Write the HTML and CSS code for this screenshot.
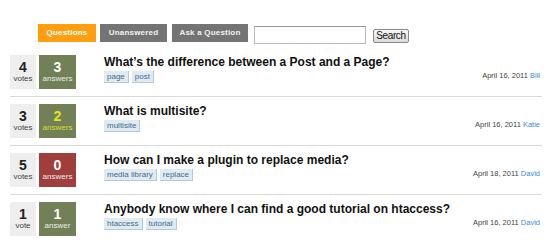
FILE: index.html
```html
<!DOCTYPE html>
<html>
<head>
<meta charset="utf-8">
<link rel="stylesheet" href="styles.css">
</head>
<body>
<div class="nav">
  <a class="tab tab-active tab-q">Questions</a>
  <a class="tab tab-u">Unanswered</a>
  <a class="tab tab-a">Ask a Question</a>
  <input class="search-input" type="text">
  <button class="search-btn">Search</button>
</div>
<div class="list">
  <div class="row">
    <div class="votes"><span class="num">4</span><span class="lbl">votes</span></div>
    <div class="answers"><span class="num">3</span><span class="lbl">answers</span></div>
    <div class="summary">
      <div class="title">What’s the difference between a Post and a Page?</div>
      <div class="meta">
        <div class="tags"><span class="tag">page</span><span class="tag">post</span></div>
        <div class="date">April 16, 2011 <span class="user">Bill</span></div>
      </div>
    </div>
  </div>
  <div class="row">
    <div class="votes"><span class="num">3</span><span class="lbl">votes</span></div>
    <div class="answers accepted"><span class="num">2</span><span class="lbl">answers</span></div>
    <div class="summary">
      <div class="title">What is multisite?</div>
      <div class="meta">
        <div class="tags"><span class="tag">multisite</span></div>
        <div class="date">April 16, 2011 <span class="user">Katie</span></div>
      </div>
    </div>
  </div>
  <div class="row">
    <div class="votes"><span class="num">5</span><span class="lbl">votes</span></div>
    <div class="answers unanswered"><span class="num">0</span><span class="lbl">answers</span></div>
    <div class="summary">
      <div class="title">How can I make a plugin to replace media?</div>
      <div class="meta">
        <div class="tags"><span class="tag">media library</span><span class="tag">replace</span></div>
        <div class="date">April 18, 2011 <span class="user">David</span></div>
      </div>
    </div>
  </div>
  <div class="row">
    <div class="votes"><span class="num">1</span><span class="lbl">vote</span></div>
    <div class="answers"><span class="num">1</span><span class="lbl">answer</span></div>
    <div class="summary">
      <div class="title">Anybody know where I can find a good tutorial on htaccess?</div>
      <div class="meta">
        <div class="tags"><span class="tag">htaccess</span><span class="tag">tutorial</span></div>
        <div class="date">April 16, 2011 <span class="user">David</span></div>
      </div>
    </div>
  </div>
</div>
</body>
</html>
```
FILE: styles.css
```css
* { box-sizing: border-box; }
body {
  margin: 0;
  background: #fff;
  font-family: "Liberation Sans", Arial, sans-serif;
  color: #111;
}
.nav {
  display: flex;
  align-items: flex-start;
  padding: 24px 0 0 38px;
  height: 48px;
}
.tab {
  display: block;
  height: 18px;
  line-height: 18px;
  text-align: center;
  font-size: 8px;
  font-weight: bold;
  letter-spacing: 0.2px;
  color: #f2f2f2;
  background-color: #696969;
  background-image: radial-gradient(circle, rgba(150,150,150,0.55) 0.6px, transparent 0.8px);
  background-size: 2px 2px;
}
.tab-active {
  color: #fff;
  background-color: #ff9900;
  background-image: radial-gradient(circle, rgba(255,190,90,0.35) 0.6px, transparent 0.8px);
}
.tab-q { width: 58px; }
.tab-u { width: 67px; margin-left: 4px; }
.tab-a { width: 76px; margin-left: 5px; }
.search-input {
  width: 112px;
  height: 18px;
  margin: 2px 0 0 6px;
  padding: 0;
  border: 1px solid #b9b9b9;
  border-top-color: #999;
  background: #fff;
}
.search-btn {
  width: 36px;
  height: 14px;
  margin: 5px 0 0 7px;
  padding: 0;
  font-family: "Liberation Sans", Arial, sans-serif;
  font-size: 10px;
  letter-spacing: -0.4px;
  line-height: 12px;
  color: #111;
  border: 1px solid #8a8a8a;
  border-radius: 2px;
  background: linear-gradient(#f6f6f6, #dcdcdc);
}
.list {
  margin-left: 10px;
  width: 532px;
}
.row {
  display: flex;
  align-items: flex-start;
  padding: 7px 0 7px 0;
  border-bottom: 1px solid #dadada;
}
.votes, .answers {
  display: flex;
  flex-direction: column;
  align-items: center;
  height: 34px;
  padding-top: 5px;
}
.votes {
  width: 26px;
  background: #eeeeee;
  color: #222;
}
.answers {
  width: 37px;
  margin-left: 3px;
  background: #718056;
  color: #fff;
}
.answers.accepted { color: #e4e41c; }
.answers.unanswered { background: #a03e3c; }
.num {
  font-size: 14px;
  font-weight: bold;
  line-height: 14px;
}
.lbl {
  font-size: 8px;
  line-height: 9px;
}
.votes .lbl { color: #444; }
.answers .lbl { color: #ececec; }
.answers.accepted .lbl { color: #dede30; }
.summary {
  flex: 1;
  margin-left: 28px;
}
.title {
  font-size: 12px;
  font-weight: bold;
  line-height: 15px;
  color: #111;
}
.meta {
  display: flex;
  justify-content: space-between;
  align-items: flex-start;
  margin-top: 1px;
}
.tags {
  display: flex;
  gap: 3px;
}
.tag {
  display: block;
  height: 12px;
  line-height: 11px;
  padding: 0 3px;
  font-size: 8px;
  color: #3e6d8e;
  background: #e0eaf1;
  border-right: 1px solid #b3cadb;
  border-bottom: 1px solid #b3cadb;
}
.date {
  margin-top: 0;
  padding-right: 2px;
  font-size: 7.5px;
  line-height: 9px;
  color: #444;
}
.user { color: #3a8cd8; }
```
